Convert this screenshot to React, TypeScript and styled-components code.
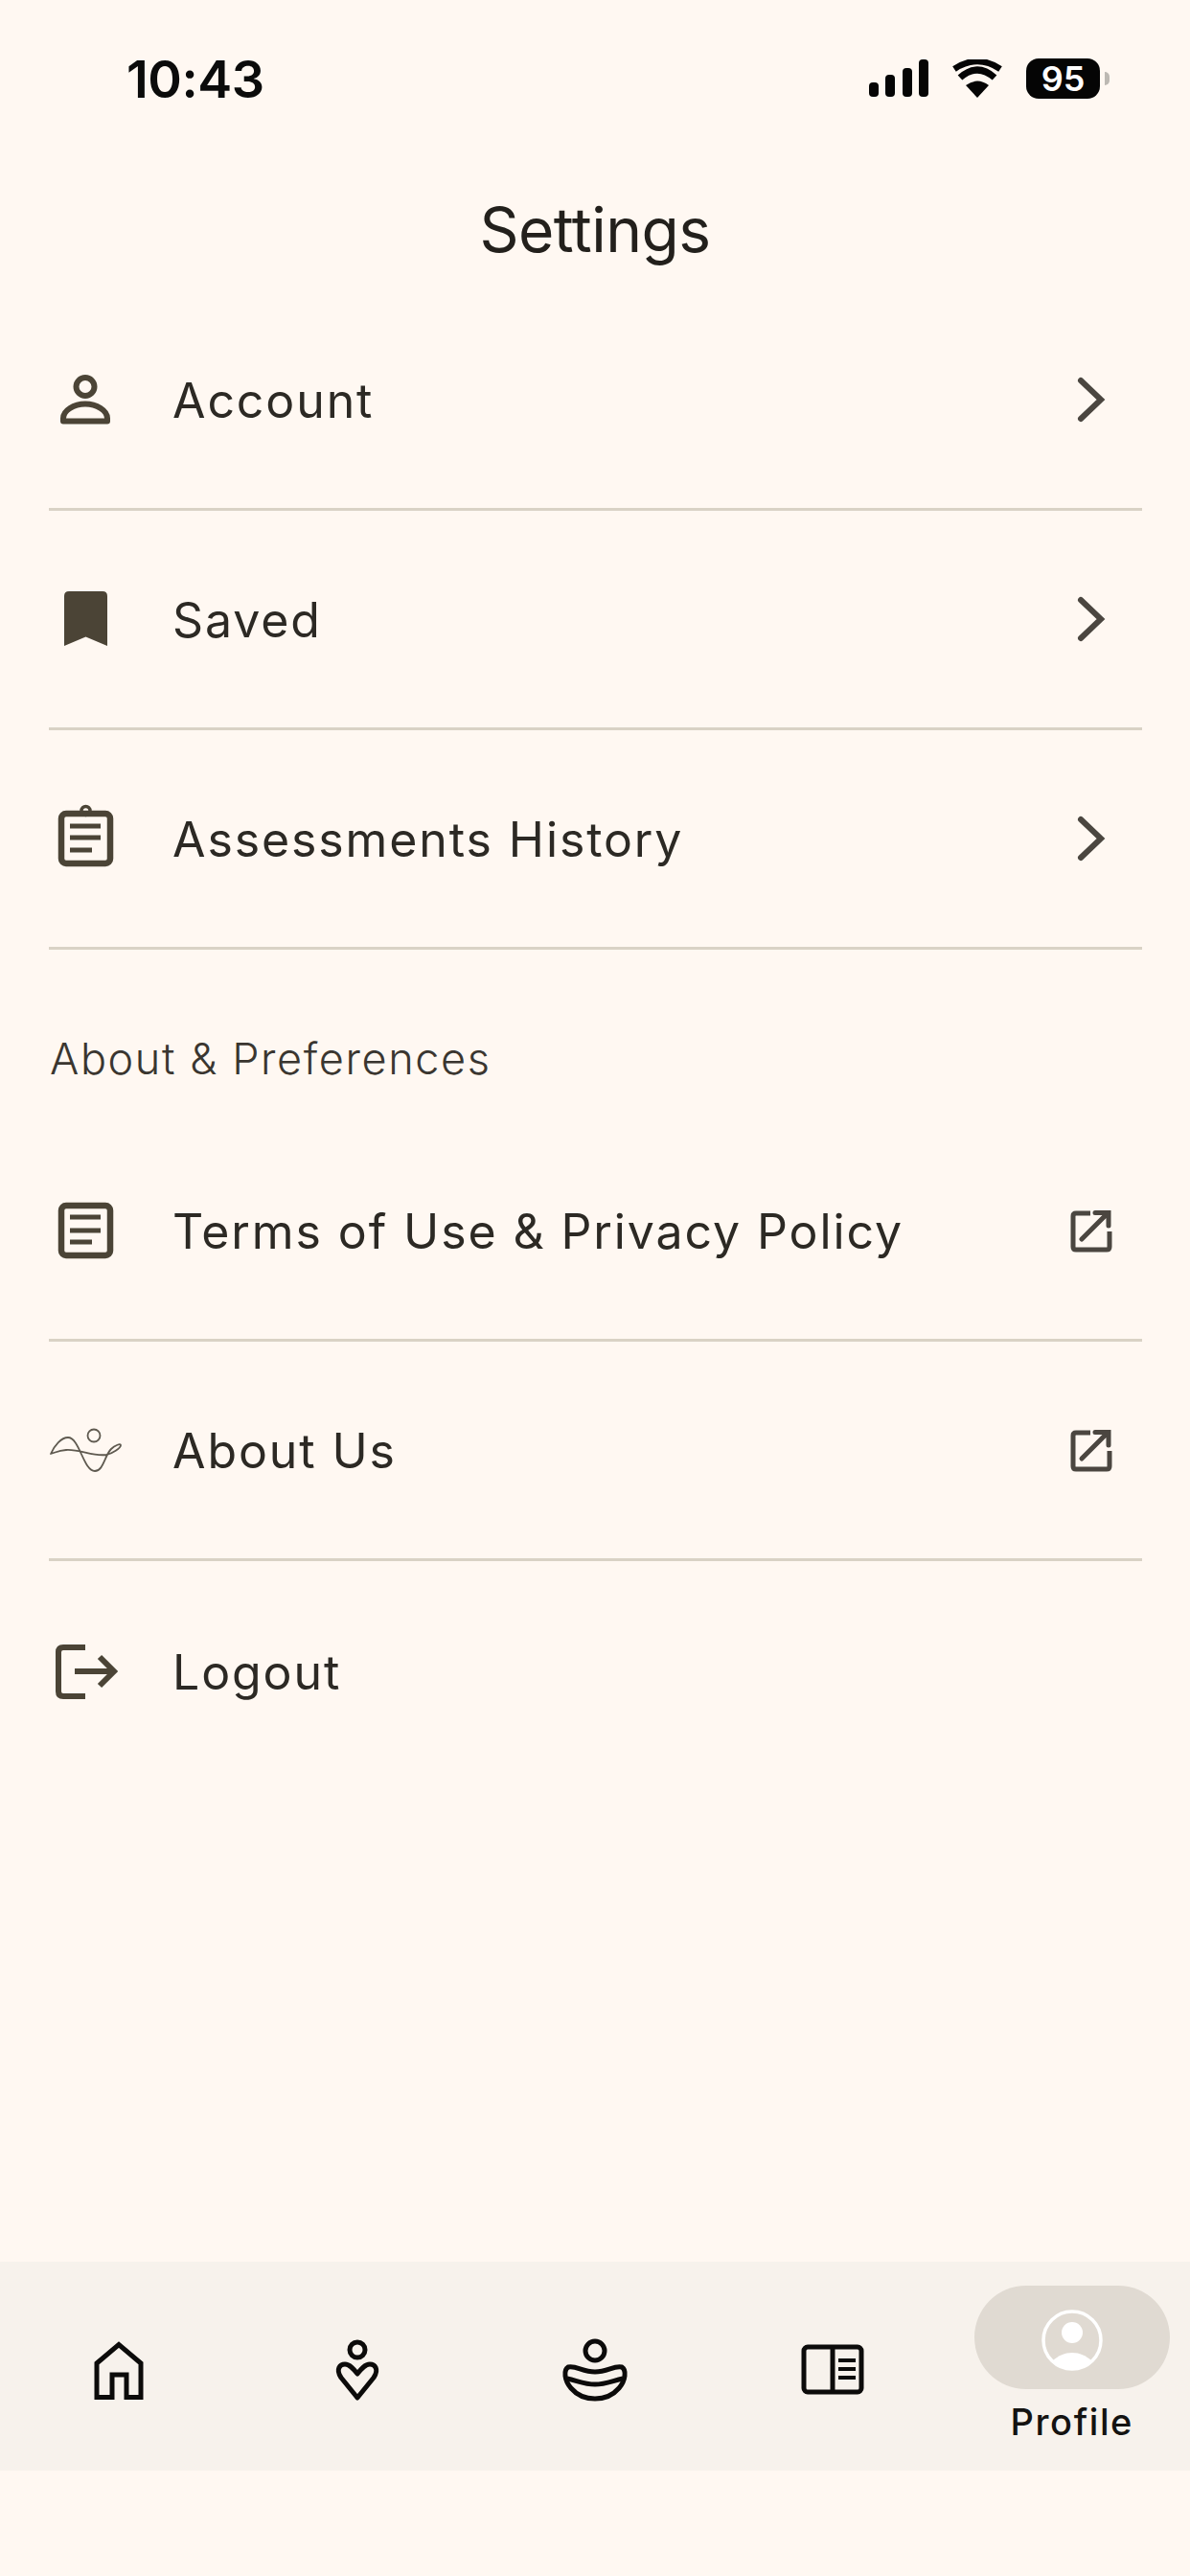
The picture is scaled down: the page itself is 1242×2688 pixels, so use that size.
import React from "react";
import styled, { createGlobalStyle } from "styled-components";

const GlobalStyle = createGlobalStyle`
  html, body {
    margin: 0;
    padding: 0;
    background: #fff8f2;
  }
`;

const Page = styled.div`
  width: 1242px;
  height: 2688px;
  display: flex;
  flex-direction: column;
  background: #fff8f2;
  font-family: Inter, "Liberation Sans", sans-serif;
  color: #2c2924;
  overflow: hidden;
`;

const StatusBar = styled.div`
  height: 164px;
  flex-shrink: 0;
  display: flex;
  align-items: center;
  justify-content: space-between;
  padding: 0 94px 0 132px;
`;

const Time = styled.span`
  font-size: 54px;
  font-weight: 600;
  letter-spacing: -0.5px;
  color: #0b0b0b;
`;

const StatusIcons = styled.div`
  display: flex;
  align-items: center;
  gap: 24px;
`;

const Battery = styled.div`
  position: relative;
  width: 77px;
  height: 42px;
  border-radius: 13px;
  background: #050505;
  color: #fff;
  display: flex;
  align-items: center;
  justify-content: center;
  font-size: 36px;
  font-weight: 600;
  line-height: 1;

  &::after {
    content: "";
    position: absolute;
    right: -10px;
    top: 14px;
    width: 5px;
    height: 14px;
    border-radius: 0 5px 5px 0;
    background: #bdb9b3;
  }
`;

const Title = styled.h1`
  height: 140px;
  flex-shrink: 0;
  margin: 0;
  padding-top: 38px;
  box-sizing: border-box;
  text-align: center;
  font-size: 64px;
  line-height: 76px;
  font-weight: 400;
  letter-spacing: -0.5px;
  color: #23201c;
`;

const List = styled.div`
  display: flex;
  flex-direction: column;
  padding: 0 50px 0 51px;
`;

const Row = styled.div<{ $last?: boolean }>`
  height: 229px;
  box-sizing: border-box;
  display: flex;
  align-items: center;
  padding: 2px 24px 0 0;
  border-bottom: ${(p) => (p.$last ? "none" : "3px solid #d9d2c5")};
`;

const RowIcon = styled.svg`
  width: 76px;
  height: 76px;
  flex-shrink: 0;
  margin: -2px 53px 0 0;
  fill: none;
  stroke: #4b4436;
  stroke-width: 6;
`;

const RowLabel = styled.span`
  flex: 1;
  font-size: 50px;
  letter-spacing: 1.9px;
  color: #2c2924;
`;

const Trailing = styled.svg`
  width: 60px;
  height: 60px;
  flex-shrink: 0;
  margin-top: -2px;
  fill: none;
  stroke: #4b4640;
  stroke-width: 5;
`;

const SectionHeading = styled.div`
  height: 180px;
  box-sizing: border-box;
  padding: 88px 0 0 1px;
  font-size: 45px;
  line-height: 52px;
  font-weight: 300;
  letter-spacing: 1.6px;
  color: #3a3630;
`;

const Nav = styled.nav`
  margin-top: auto;
  margin-bottom: 110px;
  height: 218px;
  flex-shrink: 0;
  display: grid;
  grid-template-columns: repeat(5, 1fr);
  background: #f7f2ec;
`;

const NavItem = styled.div<{ $active?: boolean }>`
  display: flex;
  flex-direction: column;
  align-items: center;
  justify-content: ${(p) => (p.$active ? "flex-start" : "center")};
  padding: ${(p) => (p.$active ? "25px 0 0 2px" : "10px 0 0 0")};
  box-sizing: border-box;
`;

const NavIcon = styled.svg`
  width: 70px;
  height: 70px;
  fill: none;
  stroke: #0c0b0a;
  stroke-width: 5;
`;

const Pill = styled.div`
  width: 204px;
  height: 108px;
  border-radius: 54px;
  background: #e0dad2;
  display: flex;
  justify-content: center;
  padding-top: 25px;
  box-sizing: border-box;
`;

const NavLabel = styled.span`
  margin-top: 11px;
  font-size: 38px;
  line-height: 46px;
  font-weight: 500;
  letter-spacing: 1.6px;
  color: #141311;
`;

type Item = { label: string; icon: React.ReactNode; trailing?: "chevron" | "external" };

const PersonIcon = (
  <RowIcon viewBox="0 0 76 76">
    <circle cx="38" cy="24.5" r="9.5" />
    <path d="M15 60.5v-3c0-8 11-15 23-15s23 7 23 15v3z" strokeLinejoin="round" />
  </RowIcon>
);

const BookmarkIcon = (
  <RowIcon viewBox="0 0 76 76">
    <path
      d="M16 14q0-5 5-5h35q5 0 5 5v52l-22.5-9.5L16 66z"
      fill="#4b4436"
      stroke="none"
    />
  </RowIcon>
);

const ClipboardIcon = (
  <RowIcon viewBox="0 0 76 76" style={{ strokeWidth: 6.5 }}>
    <rect x="13" y="12" width="51" height="52" rx="5" />
    <circle cx="38.500" cy="9" r="4.500" strokeWidth="3.500" />
    <path d="M22 25h32M22 37h32M22 50h23" strokeWidth="5" />
  </RowIcon>
);

const DocumentIcon = (
  <RowIcon viewBox="0 0 76 76" style={{ strokeWidth: 6.5 }}>
    <rect x="13" y="12" width="51" height="52" rx="5" />
    <path d="M22 24h32M22 38h32M22 50h23" strokeWidth="5" />
  </RowIcon>
);

const WaveIcon = (
  <RowIcon viewBox="0 0 76 76" style={{ strokeWidth: 1.8, stroke: "#5f5a50" }}>
    <circle cx="47" cy="23" r="6.500" />
    <path
      d="M2 42C6 33 13 25 20 25C32 25 36 60 48 60C57 60 58 44 65 37C69 33 75 31 75 33C75 36 66 42 60 43C46 45 32 37 18 38C10 38.500 6 41 2 42Z"
      strokeLinejoin="round"
    />
  </RowIcon>
);

const LogoutIcon = (
  <RowIcon viewBox="0 0 76 76">
    <path d="M38 13H15q-5 0-5 5v41q0 5 5 5h23" />
    <path d="M27 38h40M53 23l15 15-15 15" />
  </RowIcon>
);

const Chevron = (
  <Trailing viewBox="0 0 60 60" style={{ strokeWidth: 6 }}>
    <path d="M20 10l21 20-21 20" strokeLinecap="round" strokeLinejoin="miter" />
  </Trailing>
);

const External = (
  <Trailing viewBox="0 0 60 60">
    <path d="M30 12H15q-3 0-3 3v32q0 3 3 3h32q3 0 3-3V31" />
    <path d="M21 39L48 12M35 11.500h14V25" strokeLinecap="round" />
  </Trailing>
);

const topItems: Item[] = [
  { label: "Account", icon: PersonIcon, trailing: "chevron" },
  { label: "Saved", icon: BookmarkIcon, trailing: "chevron" },
  { label: "Assessments History", icon: ClipboardIcon, trailing: "chevron" },
];

const aboutItems: Item[] = [
  { label: "Terms of Use & Privacy Policy", icon: DocumentIcon, trailing: "external" },
  { label: "About Us", icon: WaveIcon, trailing: "external" },
];

function SettingsRow({ item, last }: { item: Item; last?: boolean }) {
  return (
    <Row $last={last}>
      {item.icon}
      <RowLabel>{item.label}</RowLabel>
      {item.trailing === "chevron" && Chevron}
      {item.trailing === "external" && External}
    </Row>
  );
}

export default function App() {
  return (
    <Page>
      <GlobalStyle />
      <StatusBar>
        <Time>10:43</Time>
        <StatusIcons>
          <svg width="62" height="40" viewBox="0 0 62 40" fill="#050505">
            <rect x="0" y="24" width="10" height="15" rx="4" />
            <rect x="17" y="16" width="10" height="23" rx="4" />
            <rect x="35" y="9" width="10" height="30" rx="4" />
            <rect x="52" y="0" width="10" height="39" rx="4" />
          </svg>
          <svg width="54" height="40" viewBox="0 0 54 40" fill="none" stroke="#050505">
            <path d="M27 40L15 27Q27 18 39 27Z" fill="#050505" stroke="none" />
            <path d="M9 19Q27 3 45 19" strokeWidth="7" />
            <path d="M3 10Q27 -6 51 10" strokeWidth="6.500" />
          </svg>
          <Battery>95</Battery>
        </StatusIcons>
      </StatusBar>

      <Title>Settings</Title>

      <List>
        {topItems.map((item) => (
          <SettingsRow key={item.label} item={item} />
        ))}
        <SectionHeading>About &amp; Preferences</SectionHeading>
        {aboutItems.map((item) => (
          <SettingsRow key={item.label} item={item} />
        ))}
        <SettingsRow last item={{ label: "Logout", icon: LogoutIcon }} />
      </List>

      <Nav>
        <NavItem>
          <NavIcon viewBox="0 0 70 70">
            <path d="M12 62.500V27L35 7.500 58 27v35.500H43V39H28v23.500z" />
          </NavIcon>
        </NavItem>
        <NavItem>
          <NavIcon viewBox="0 0 70 70">
            <ellipse cx="35" cy="13" rx="8" ry="8" />
            <path
              d="M35 63L18 42C12 33 17 28 22 28C27 28 31 33 35 38C39 33 43 28 48 28C53 28 58 33 52 42Z"
              strokeLinejoin="round"
            />
          </NavIcon>
        </NavItem>
        <NavItem>
          <NavIcon viewBox="0 0 70 70">
            <ellipse cx="35" cy="14" rx="10" ry="10" />
            <path
              d="M7 31C15 29 22 36 35 36C48 36 55 29 63 31C68 34 67 45 60 53C54 60 45 64 35 64C25 64 16 60 10 53C3 45 2 34 7 31Z"
              strokeLinejoin="round"
            />
            <path d="M6 43C16 45 24 49 35 49C46 49 54 45 64 43" />
          </NavIcon>
        </NavItem>
        <NavItem>
          <NavIcon viewBox="0 0 70 70">
            <rect x="5" y="10" width="60" height="47" rx="4" />
            <path d="M35 10v47" />
            <path d="M41 24h18M41 33h18M41 42h18" strokeWidth="4" />
          </NavIcon>
        </NavItem>
        <NavItem $active>
          <Pill>
            <svg width="64" height="64" viewBox="0 0 64 64" fill="none">
              <circle cx="32" cy="32" r="30" stroke="#fff" strokeWidth="3.500" />
              <circle cx="32" cy="24" r="11" fill="#fff" />
              <path
                d="M12 53C18 48 24 45 32 45C40 45 46 48 52 53C47 60 40 63 32 63C24 63 17 60 12 53Z"
                fill="#fff"
              />
            </svg>
          </Pill>
          <NavLabel>Profile</NavLabel>
        </NavItem>
      </Nav>
    </Page>
  );
}
